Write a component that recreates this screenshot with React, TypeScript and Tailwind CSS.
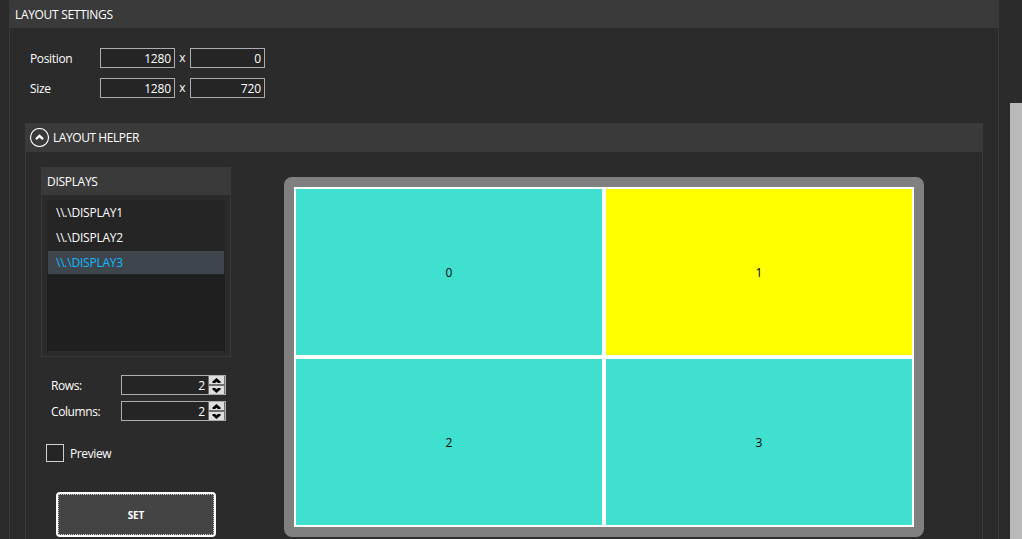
import type { ReactNode } from "react";

function Field({ value }: { value: string }) {
  return (
    <div className="flex h-5 w-[75px] items-center justify-end border border-[#abadb3] bg-[#252525] pt-px pr-[3px] tracking-[-0.15px]">
      {value}
    </div>
  );
}

function PairRow({ label, a, b }: { label: string; a: string; b: string }) {
  return (
    <div className="flex h-5 items-center">
      <span className="w-[70px] pt-px tracking-[-0.35px]">{label}</span>
      <Field value={a} />
      <span className="w-[15px] pb-px text-center">x</span>
      <Field value={b} />
    </div>
  );
}

function SpinButton({ up }: { up?: boolean }) {
  return (
    <button className="flex h-2 w-[15px] items-center justify-center bg-[#dddddd]">
      <svg width="9" height="5" viewBox="0 0 9 5" fill="#000">
        {up ? <path d="M4.5 0 L9 4 L8 5 L6 5 L4.5 3.8 L3 5 L1 5 L0 4 Z" /> : <path d="M4.5 5 L9 1 L8 0 L6 0 L4.5 1.2 L3 0 L1 0 L0 1 Z" />}
      </svg>
    </button>
  );
}

function Spinner({ label, value }: { label: string; value: string }) {
  return (
    <div className="flex h-5 items-center">
      <span className="w-[70px] pt-px tracking-[-0.4px]">{label}</span>
      <div className="flex h-5 w-[105px] border border-[#abadb3] bg-[#252525]">
        <span className="flex flex-1 items-center justify-end pt-px pr-[3px]">{value}</span>
        <div className="flex w-[17px] flex-col items-center justify-between border-x border-[#707070] bg-[#707070]">
          <SpinButton up />
          <SpinButton />
        </div>
      </div>
    </div>
  );
}

function Cell({ children, active }: { children: ReactNode; active?: boolean }) {
  return (
    <div className={`flex items-center justify-center border-2 border-white pt-0.5 text-black ${active ? "bg-[#ffff00]" : "bg-[#40e0d0]"}`}>
      {children}
    </div>
  );
}

export default function App() {
  return (
    <div className="flex h-[539px] w-[1022px] overflow-hidden bg-[#2b2b2b] pl-[9px] font-['Open_Sans','Noto_Sans',sans-serif] text-[12px] leading-4 text-white">
      <section className="flex h-[560px] w-[990px] flex-col border-x border-[#3a3a3a]">
        <header className="flex h-7 shrink-0 items-center bg-[#3a3a3a] pl-[5px] pt-px tracking-[-0.32px]">LAYOUT SETTINGS</header>
        <div className="flex flex-col gap-2.5 pt-5 pl-5">
          <PairRow label="Position" a="1280" b="0" />
          <PairRow label="Size" a="1280" b="720" />
        </div>
        <section className="mt-[25px] ml-[15px] flex w-[958px] flex-1 flex-col border-x border-[#3a3a3a]">
          <header className="flex h-[29px] items-center gap-1 bg-[#3a3a3a] pl-1 tracking-[-0.43px]">
            <svg width="19" height="19" viewBox="0 0 19 19" fill="none" stroke="#fff">
              <circle cx="9.5" cy="9.5" r="9" strokeWidth="1.1" />
              <path d="M6 11.2 L9.5 7.9 L13 11.2" strokeWidth="2.3" />
            </svg>
            LAYOUT HELPER
          </header>
          <div className="flex pl-[15px]">
            <div className="w-[190px] pt-[15px]">
              <section className="h-[190px] border border-t-0 border-[#3a3a3a]">
                <header className="flex h-7 items-center bg-[#3a3a3a] pl-[5px] pt-px tracking-[-0.3px]">DISPLAYS</header>
                <ul className="mx-[5px] mt-[5px] h-[151px] bg-[#1f1f1f] tracking-[-0.22px]">
                  <li className="flex h-[25px] items-center bg-[#252525] pl-[9px]">{"\\\\.\\DISPLAY1"}</li>
                  <li className="flex h-[25px] items-center bg-[#252525] pl-[9px]">{"\\\\.\\DISPLAY2"}</li>
                  <li className="flex h-[25px] items-center border border-[#252525] bg-[#3f454c] pl-2 text-[#10b9ff]">{"\\\\.\\DISPLAY3"}</li>
                </ul>
              </section>
              <div className="mt-[18px] ml-2.5 flex flex-col gap-1.5">
                <Spinner label="Rows:" value="2" />
                <Spinner label="Columns:" value="2" />
              </div>
              <label className="mt-[23px] ml-[5px] flex h-[18px] items-center gap-1.5">
                <span className="size-[18px] border border-[#d0d0d0] bg-[#252525]" />
                <span className="pt-px tracking-[-0.4px]">Preview</span>
              </label>
              <button className="mt-[30px] ml-[15px] flex h-[45px] w-[160px] rounded-[4px] border-2 border-white bg-[#444444]">
                <span className="flex h-full w-full items-center justify-center border border-dotted border-[#c8c8c8] pt-px text-[10px] font-bold tracking-[-0.1px]">SET</span>
              </button>
            </div>
            <div className="mt-[25px] ml-[53px] grid h-[360px] w-[640px] grid-cols-2 grid-rows-2 rounded-[8px] bg-[#808080] p-2.5">
              <Cell>0</Cell>
              <Cell active>1</Cell>
              <Cell>2</Cell>
              <Cell>3</Cell>
            </div>
          </div>
        </section>
      </section>
      <div className="mt-[103px] ml-[11px] w-3 bg-[#b9b9b9]" />
    </div>
  );
}
